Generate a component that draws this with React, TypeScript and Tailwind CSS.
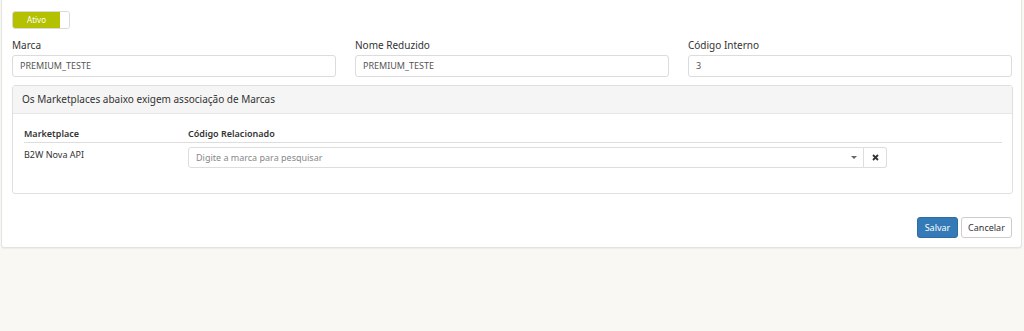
import React from "react";

export default function App() {
  return (
    <div className="min-h-[331px] bg-[#faf8f3]" style={{ fontFamily: '"Noto Sans", "Open Sans", sans-serif' }}>
      <div className="ml-[1px] mr-[2px] bg-white border border-t-0 border-[#e3e3e3] rounded-b-[3px] shadow-[0_1px_1px_rgba(0,0,0,0.05)] pl-[10px] pr-[8px] pt-[11px] pb-[9px]">
        <div className="flex">
          <div className="flex w-[58px] h-[18px] border border-[#d9d9d9] rounded-[3px] overflow-hidden">
            <div className="w-[47px] bg-[#b3c100] text-white text-[8px] flex items-center justify-center">Ativo</div>
            <div className="flex-1 bg-white" />
          </div>
        </div>
        <div className="grid grid-cols-[324px_314px_324px] gap-x-[19px] mt-[8px]">
          {[
            ["Marca", "PREMIUM_TESTE"],
            ["Nome Reduzido", "PREMIUM_TESTE"],
            ["Código Interno", "3"],
          ].map(([l, v]) => (
            <div key={l} className="flex flex-col">
              <label className="text-[10px] leading-[17px] text-[#333]">{l}</label>
              <div className="mt-[1px] h-[22px] border border-[#dcdcdc] rounded-[3px] px-[7px] flex items-center text-[9px] text-[#555]">{v}</div>
            </div>
          ))}
        </div>
        <div className="mt-[8px] border border-[#e0e0e0] rounded-[3px]">
          <div className="h-[28px] bg-[#f5f5f5] border-b border-[#e6e6e6] flex items-center px-[9px] text-[10px] text-[#333]">
            Os Marketplaces abaixo exigem associação de Marcas
          </div>
          <div className="pl-[11px] pr-[10px] pt-[12px] pb-[25px]">
            <div className="flex text-[9px] font-semibold text-[#333] border-b border-[#ddd] h-[17px] items-center">
              <div className="w-[164px]">Marketplace</div>
              <div>Código Relacionado</div>
            </div>
            <div className="flex pt-[4px] text-[9px] text-[#333]">
              <div className="w-[164px] pt-[1px]">B2W Nova API</div>
              <div className="flex">
                <div className="w-[676px] h-[21px] border border-[#ddd] rounded-l-[3px] flex items-center justify-between px-[7px] text-[#888] bg-white">
                  <span>Digite a marca para pesquisar</span>
                  <svg width="6" height="4" viewBox="0 0 6 4" className="mr-[-1px]"><path d="M0 0h6L3 3z" fill="#666" /></svg>
                </div>
                <div className="w-[23px] h-[21px] border border-l-0 border-[#ddd] rounded-r-[3px] flex items-center justify-center bg-white">
                  <svg width="7" height="7" viewBox="0 0 7 7"><path d="M1 1l5 5M6 1L1 6" stroke="#333" strokeWidth="1.8" /></svg>
                </div>
              </div>
            </div>
          </div>
        </div>
        <div className="flex justify-end gap-[3px] mt-[23px] mr-[1px]">
          <button className="h-[21px] w-[41px] bg-[#337ab7] border border-[#2e6da4] rounded-[3px] text-white text-[9px]">Salvar</button>
          <button className="h-[21px] w-[51px] bg-white border border-[#ccc] rounded-[3px] text-[#333] text-[9px]">Cancelar</button>
        </div>
      </div>
    </div>
  );
}
